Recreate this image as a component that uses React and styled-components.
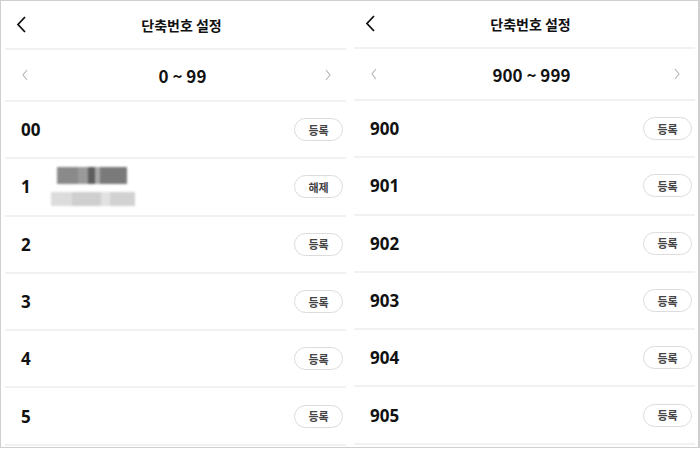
import styled, { createGlobalStyle } from "styled-components";

const GlobalStyle = createGlobalStyle`
  body {
    margin: 0;
    background: #fff;
    font-family: "Noto Sans CJK KR", "Noto Sans", sans-serif;
  }
`;

const Frame = styled.div`
  width: 700px;
  height: 448px;
  box-sizing: border-box;
  border: 1px solid #cfcfcf;
  border-right-width: 2px;
  display: flex;
  overflow: hidden;
  background: #fff;
`;

const Panel = styled.div`
  width: 349px;
  flex: none;
  display: flex;
  flex-direction: column;
  margin-top: ${(p) => p.$shift}px;
`;

const Header = styled.div`
  height: 47px;
  position: relative;
  display: flex;
  align-items: center;
  justify-content: center;
  padding-left: 12px;
  font-size: 14px;
  font-weight: 700;
  color: #111;
`;

const BackBtn = styled.svg`
  position: absolute;
  left: 14px;
  top: 14px;
`;

const Line = styled.div`
  height: 2px;
  margin: 0 4px;
  background: #f1f1f1;
  flex: none;
`;

const RangeBar = styled.div`
  height: 50px;
  display: flex;
  align-items: center;
  justify-content: space-between;
  padding: 0 18px 0 20px;
  font-size: 17px;
  font-weight: 700;
  color: #111;
`;

const RangeText = styled.span`
  padding-left: 12px;
`;

const Row = styled.div`
  height: 55.3px;
  display: flex;
  align-items: center;
  padding: 0 7px 0 20px;
  flex: none;
`;

const Num = styled.span`
  font-size: 17px;
  font-weight: 700;
  color: #111;
  font-family: "Noto Sans", sans-serif;
  width: 30px;
`;

const Contact = styled.div`
  flex: 1;
  display: flex;
  flex-direction: column;
  gap: 8px;
  filter: blur(1.2px);
`;

const Blot = styled.div`
  height: ${(p) => p.$h}px;
  width: ${(p) => p.$w}px;
  margin-left: ${(p) => p.$ml}px;
  background: ${(p) => p.$bg};
`;

const Spacer = styled.div`
  flex: 1;
`;

const Pill = styled.button`
  width: 49px;
  height: 23px;
  border: 1px solid #dcdcdc;
  border-radius: 12px;
  background: #fff;
  font-family: "Noto Sans CJK KR", sans-serif;
  font-size: 11px;
  font-weight: 700;
  color: #444;
  padding: 0;
  display: flex;
  align-items: center;
  justify-content: center;
`;

const Chevron = ({ dir }) => (
  <svg width="8" height="12" viewBox="0 0 8 12">
    <path
      d={dir === "left" ? "M6 1 L2 6 L6 11" : "M2 1 L6 6 L2 11"}
      fill="none"
      stroke="#b8b8b8"
      strokeWidth="1.2"
    />
  </svg>
);

const BlurredName = () => (
  <Contact>
    <Blot $w={70} $h={17} $ml={6} $bg="linear-gradient(90deg,#8a8a8a 0 30%,#9a9a9a 30% 45%,#5e5e5e 45% 55%,#a9a9a9 55% 62%,#7a7a7a 62% 100%)" />
    <Blot $w={84} $h={14} $ml={0} $bg="linear-gradient(90deg,#dcdcdc 0 25%,#cfcfcf 25% 60%,#e2e2e2 60% 70%,#d2d2d2 70% 100%)" />
  </Contact>
);

const PanelView = ({ range, rows, shift }) => (
  <Panel $shift={shift}>
    <Header>
      <BackBtn width="14" height="20" viewBox="0 0 14 20">
        <path d="M10 2 L3 9.5 L10 17" fill="none" stroke="#111" strokeWidth="1.8" />
      </BackBtn>
      단축번호 설정
    </Header>
    <Line />
    <RangeBar>
      <Chevron dir="left" />
      <RangeText>{range}</RangeText>
      <Chevron dir="right" />
    </RangeBar>
    <Line />
    {rows.map((r) => (
      <div key={r.num}>
        <Row>
          <Num>{r.num}</Num>
          {r.contact ? <BlurredName /> : <Spacer />}
          <Pill>{r.contact ? "해제" : "등록"}</Pill>
        </Row>
        <Line />
      </div>
    ))}
  </Panel>
);

export default function App() {
  const left = [
    { num: "00" },
    { num: "1", contact: true },
    { num: "2" },
    { num: "3" },
    { num: "4" },
    { num: "5" },
  ];
  const right = ["900", "901", "902", "903", "904", "905"].map((num) => ({ num }));
  return (
    <>
      <GlobalStyle />
      <Frame>
        <PanelView range="0 ~ 99" rows={left} shift={0} />
        <PanelView range="900 ~ 999" rows={right} shift={-1} />
      </Frame>
    </>
  );
}
